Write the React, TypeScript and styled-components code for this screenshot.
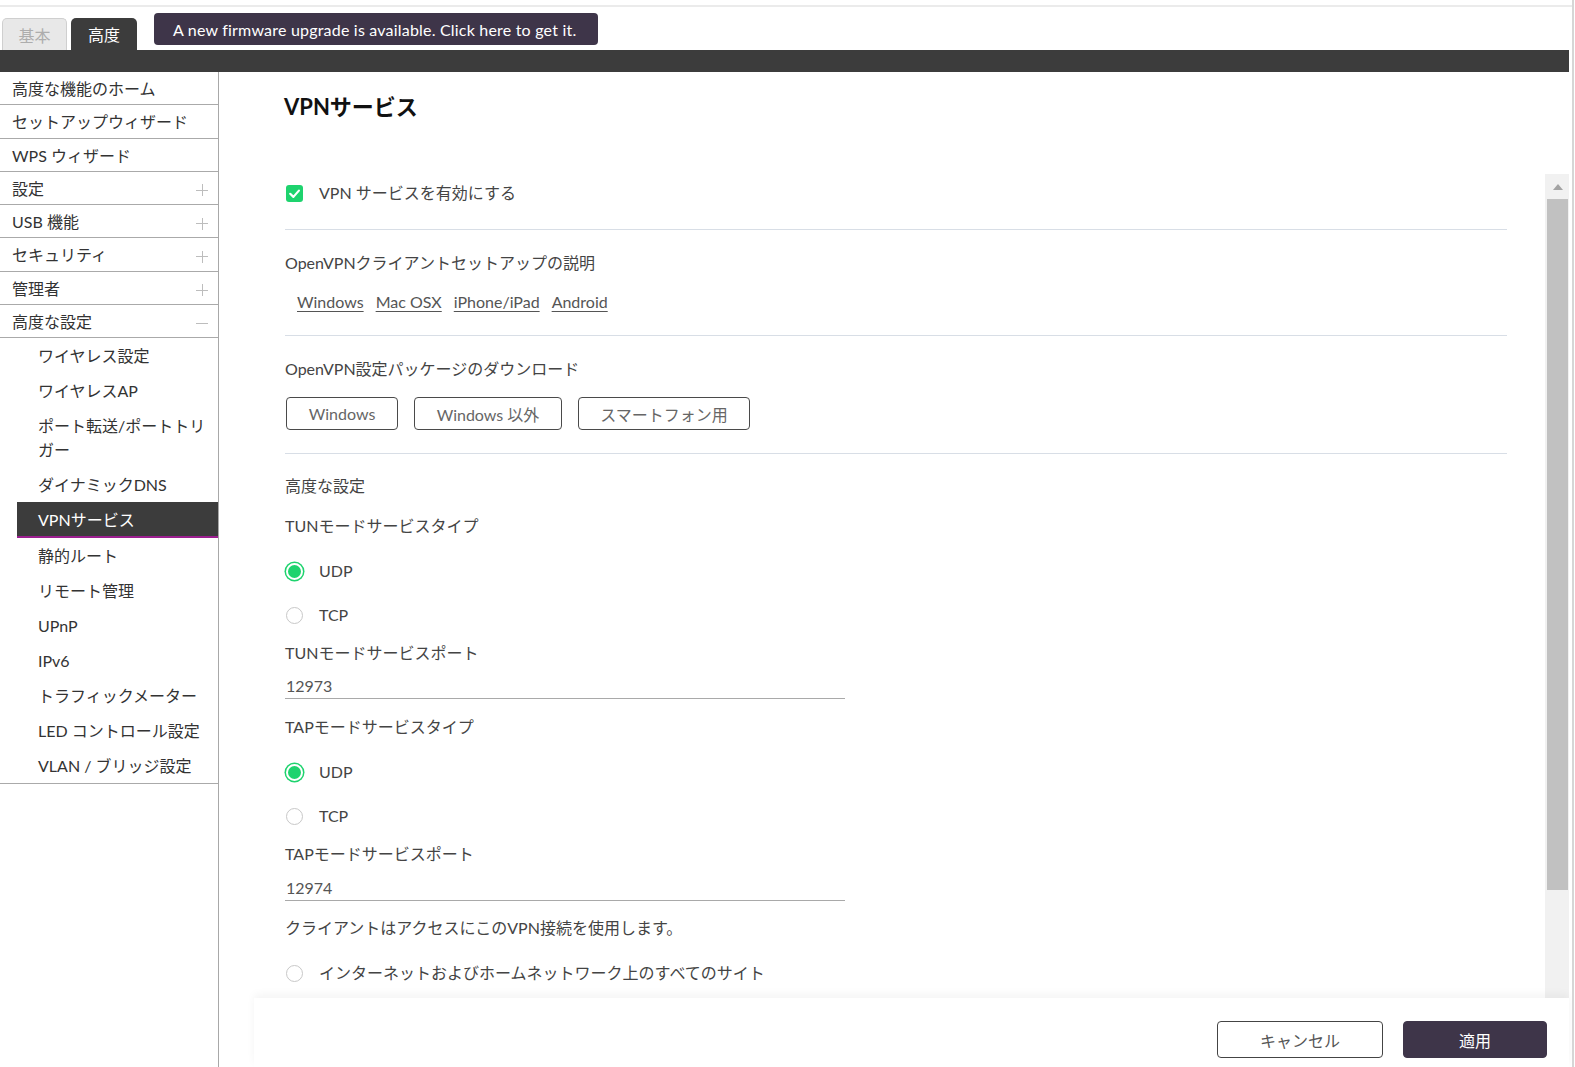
import React from 'react'
import styled, { createGlobalStyle } from 'styled-components'

const GlobalStyle = createGlobalStyle`
  html, body {
    margin: 0;
    padding: 0;
    background: #fff;
  }
  body {
    font-family: Lato, 'Noto Sans CJK JP', sans-serif;
    font-size: 16px;
    color: #333;
  }
  * {
    box-sizing: border-box;
  }
`

const GREEN = '#1ed36e'
const DARK = '#3c3c3c'
const PURPLE = '#3e3549'

const mainNav = [
  { label: '高度な機能のホーム' },
  { label: 'セットアップウィザード' },
  { label: 'WPS ウィザード' },
  { label: '設定', toggle: 'plus' },
  { label: 'USB 機能', toggle: 'plus' },
  { label: 'セキュリティ', toggle: 'plus' },
  { label: '管理者', toggle: 'plus' },
  { label: '高度な設定', toggle: 'minus' },
]

const subNav = [
  'ワイヤレス設定',
  'ワイヤレスAP',
  'ポート転送/ポートトリガー',
  'ダイナミックDNS',
  'VPNサービス',
  '静的ルート',
  'リモート管理',
  'UPnP',
  'IPv6',
  'トラフィックメーター',
  'LED コントロール設定',
  'VLAN / ブリッジ設定',
]

export default function App() {
  return (
    <>
      <GlobalStyle />
      <Page>
        <TopLine />
        <Frame>
          <Header>
            <Tabs>
              <Tab>基本</Tab>
              <Tab $active>高度</Tab>
            </Tabs>
            <Banner>A new firmware upgrade is available. Click here to get it.</Banner>
          </Header>
          <DarkBar />
          <Body>
            <Sidebar>
              {mainNav.map(item => (
                <NavItem key={item.label}>
                  <span>{item.label}</span>
                  {item.toggle && <Toggle $minus={item.toggle === 'minus'} />}
                </NavItem>
              ))}
              <SubList>
                {subNav.map(label => (
                  <SubItem key={label} $active={label === 'VPNサービス'}>
                    {label}
                  </SubItem>
                ))}
              </SubList>
            </Sidebar>

            <Main>
              <TitleBlock>
                <Title>VPNサービス</Title>
              </TitleBlock>

              <ScrollArea>
                <ScrollContent>
                  <CheckRow>
                    <CheckBox>
                      <svg width="17" height="17" viewBox="0 0 17 17">
                        <polyline
                          points="4.2,8.8 7.4,11.9 12.9,5.6"
                          fill="none"
                          stroke="#fff"
                          strokeWidth="2.2"
                          strokeLinecap="round"
                          strokeLinejoin="round"
                        />
                      </svg>
                    </CheckBox>
                    <RowText>VPN サービスを有効にする</RowText>
                  </CheckRow>

                  <Divider $mt={19} />

                  <Label $mt={21}>OpenVPNクライアントセットアップの説明</Label>
                  <LinkRow>
                    <Link href="#">Windows</Link>
                    <Link href="#">Mac OSX</Link>
                    <Link href="#">iPhone/iPad</Link>
                    <Link href="#">Android</Link>
                  </LinkRow>

                  <Divider $mt={21} />

                  <Label $mt={21}>OpenVPN設定パッケージのダウンロード</Label>
                  <ButtonRow>
                    <OutlineButton $w={112}>Windows</OutlineButton>
                    <OutlineButton $w={148}>Windows 以外</OutlineButton>
                    <OutlineButton $w={172}>スマートフォン用</OutlineButton>
                  </ButtonRow>

                  <Divider $mt={23} />

                  <Label $mt={20}>高度な設定</Label>
                  <Label $mt={16}>TUNモードサービスタイプ</Label>
                  <RadioRow $mt={21}>
                    <Radio $checked />
                    <RowText>UDP</RowText>
                  </RadioRow>
                  <RadioRow $mt={20}>
                    <Radio />
                    <RowText>TCP</RowText>
                  </RadioRow>
                  <Label $mt={14}>TUNモードサービスポート</Label>
                  <PortInput $mt={8} defaultValue="12973" />

                  <Label $mt={16}>TAPモードサービスタイプ</Label>
                  <RadioRow $mt={21}>
                    <Radio $checked />
                    <RowText>UDP</RowText>
                  </RadioRow>
                  <RadioRow $mt={20}>
                    <Radio />
                    <RowText>TCP</RowText>
                  </RadioRow>
                  <Label $mt={14}>TAPモードサービスポート</Label>
                  <PortInput $mt={9} defaultValue="12974" />

                  <Label $mt={15}>クライアントはアクセスにこのVPN接続を使用します。</Label>
                  <RadioRow $mt={21}>
                    <Radio />
                    <RowText>インターネットおよびホームネットワーク上のすべてのサイト</RowText>
                  </RadioRow>
                </ScrollContent>

                <ScrollTrack>
                  <ScrollArrow>
                    <Triangle />
                  </ScrollArrow>
                  <ScrollThumb />
                </ScrollTrack>
              </ScrollArea>

              <Footer>
                <FooterButton $w={166}>キャンセル</FooterButton>
                <FooterButton $w={144} $primary>
                  適用
                </FooterButton>
              </Footer>
            </Main>
          </Body>
        </Frame>
      </Page>
    </>
  )
}

const Page = styled.div`
  width: 1574px;
  height: 1067px;
  border-right: 2px solid #d6d6d6;
  overflow: hidden;
`

const TopLine = styled.div`
  height: 2px;
  margin-top: 5px;
  background: #ebebeb;
`

const Frame = styled.div`
  width: 1569px;
`

const Header = styled.div`
  display: flex;
  align-items: flex-start;
  height: 43px;
  padding-left: 2px;
`

const Tabs = styled.div`
  display: flex;
  gap: 4px;
  align-self: flex-end;
`

const Tab = styled.div<{ $active?: boolean }>`
  width: ${p => (p.$active ? 66 : 65)}px;
  height: 32px;
  display: flex;
  align-items: center;
  justify-content: center;
  border-radius: 5px 5px 0 0;
  font-size: 16px;
  background: ${p => (p.$active ? DARK : '#e8e8e8')};
  color: ${p => (p.$active ? '#fff' : '#adadad')};
  border: ${p => (p.$active ? 'none' : '1px solid #cfcfcf')};
  border-bottom: none;
`

const Banner = styled.div`
  margin: 6px 0 0 17px;
  height: 32px;
  padding: 0 22px 0 19px;
  display: flex;
  align-items: center;
  background: ${PURPLE};
  color: #fff;
  border-radius: 4px;
  font-size: 16px;
  letter-spacing: 0.2px;
`

const DarkBar = styled.div`
  height: 22px;
  background: ${DARK};
`

const Body = styled.div`
  display: flex;
  height: 995px;
`

const Sidebar = styled.nav`
  width: 219px;
  flex-shrink: 0;
  border-right: 1px solid #a8a8a8;
`

const NavItem = styled.div`
  height: 33.25px;
  display: flex;
  align-items: center;
  justify-content: space-between;
  padding: 0 10px 0 12px;
  border-bottom: 1px solid #aaa;
  color: #333;
  font-size: 16px;
`

const Toggle = styled.span<{ $minus?: boolean }>`
  position: relative;
  width: 12px;
  height: 12px;
  margin-top: 5px;

  &::before,
  &::after {
    content: '';
    position: absolute;
    background: #bdbdbd;
  }
  &::before {
    left: 0;
    right: 0;
    top: 5.5px;
    height: 1px;
  }
  &::after {
    display: ${p => (p.$minus ? 'none' : 'block')};
    top: 0;
    bottom: 0;
    left: 5.5px;
    width: 1px;
  }
`

const SubList = styled.div`
  padding: 0 0 0 17px;
  border-bottom: 1px solid #aaa;
`

const SubItem = styled.div<{ $active?: boolean }>`
  padding: 5.5px 12px ${p => (p.$active ? 4.5 : 5.5)}px 21px;
  line-height: 24px;
  font-size: 16px;
  color: ${p => (p.$active ? '#fff' : '#333')};
  background: ${p => (p.$active ? DARK : 'transparent')};
  border-bottom: ${p => (p.$active ? '2px solid #9b1f8f' : 'none')};
`

const Main = styled.main`
  flex: 1;
  display: flex;
  flex-direction: column;
  padding-left: 35px;
  min-width: 0;
`

const TitleBlock = styled.div`
  height: 102px;
  padding: 21px 0 0 30px;
`

const Title = styled.h1`
  margin: 0;
  font-size: 22px;
  line-height: 28px;
  font-weight: 700;
  color: #111;
`

const ScrollArea = styled.div`
  height: 824px;
  display: flex;
`

const ScrollContent = styled.div`
  flex: 1;
  overflow: hidden;
  padding: 2px 38px 0 31px;
  color: #444;
`

const ScrollTrack = styled.div`
  width: 24px;
  flex-shrink: 0;
  background: #f1f1f1;
  display: flex;
  flex-direction: column;
`

const ScrollArrow = styled.div`
  height: 25px;
  display: flex;
  align-items: center;
  justify-content: center;
  padding-left: 1px;
`

const Triangle = styled.span`
  width: 0;
  height: 0;
  border-left: 5.5px solid transparent;
  border-right: 5.5px solid transparent;
  border-bottom: 6px solid #a3a3a3;
`

const ScrollThumb = styled.div`
  height: 691px;
  margin: 0 1px 0 2px;
  background: #c1c1c1;
`

const CheckRow = styled.div`
  height: 34px;
  display: flex;
  align-items: center;
  gap: 16px;
  padding-left: 1px;
`

const CheckBox = styled.span`
  width: 17px;
  height: 17px;
  border-radius: 3px;
  background: ${GREEN};
  display: flex;
  flex-shrink: 0;
`

const RowText = styled.span`
  line-height: 24px;
  font-size: 16px;
  color: #444;
`

const Divider = styled.div<{ $mt: number }>`
  height: 1px;
  margin-top: ${p => p.$mt}px;
  background: #d8dee6;
`

const Label = styled.div<{ $mt: number }>`
  margin-top: ${p => p.$mt}px;
  line-height: 24px;
  font-size: 16px;
  color: #444;
`

const LinkRow = styled.div`
  display: flex;
  gap: 12px;
  margin-top: 15px;
  padding-left: 12px;
  line-height: 24px;
`

const Link = styled.a`
  color: #555;
  font-size: 16px;
  text-decoration: underline;
  text-underline-offset: 3px;
  text-decoration-thickness: 1px;
`

const ButtonRow = styled.div`
  display: flex;
  gap: 16px;
  margin-top: 16px;
  padding-left: 1px;
`

const OutlineButton = styled.button<{ $w: number }>`
  width: ${p => p.$w}px;
  height: 33px;
  padding: 0;
  border: 1px solid #4a4a4a;
  border-radius: 4px;
  background: #fff;
  color: #666;
  font-family: inherit;
  font-size: 16px;
`

const RadioRow = styled.div<{ $mt: number }>`
  margin-top: ${p => p.$mt}px;
  height: 24px;
  display: flex;
  align-items: center;
  gap: 16px;
  padding-left: 1px;
`

const Radio = styled.span<{ $checked?: boolean }>`
  width: 17px;
  height: 17px;
  border-radius: 50%;
  flex-shrink: 0;
  border: ${p => (p.$checked ? '2px solid #fff' : '1px solid #c8c8c8')};
  background: ${p => (p.$checked ? GREEN : '#fff')};
  box-shadow: ${p => (p.$checked ? `0 0 0 1.5px ${GREEN}` : 'none')};
`

const PortInput = styled.input<{ $mt: number }>`
  display: block;
  margin-top: ${p => p.$mt}px;
  width: 560px;
  height: 26px;
  padding: 0 0 1px 1px;
  border: none;
  border-bottom: 1px solid #a9a9a9;
  background: transparent;
  color: #555;
  font-family: inherit;
  font-size: 16px;
  line-height: 24px;
  outline: none;
`

const Footer = styled.footer`
  position: relative;
  height: 69px;
  display: flex;
  justify-content: flex-end;
  align-items: flex-start;
  gap: 20px;
  padding: 23px 22px 0 0;
  background: #fff;
  box-shadow: 0 -4px 8px rgba(0, 0, 0, 0.045);
`

const FooterButton = styled.button<{ $w: number; $primary?: boolean }>`
  width: ${p => p.$w}px;
  height: 37px;
  padding: 0;
  border-radius: 4px;
  font-family: inherit;
  font-size: 16px;
  border: 1px solid ${p => (p.$primary ? PURPLE : '#444')};
  background: ${p => (p.$primary ? PURPLE : '#fff')};
  color: ${p => (p.$primary ? '#fff' : '#555')};
`
